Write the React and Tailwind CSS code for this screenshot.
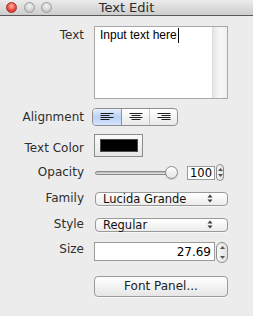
import React from "react";

const LABEL = "w-[84px] shrink-0 text-right text-[12px] leading-[15px] text-[#2e2e2e]";

const AlignIcon = ({ kind }) => {
  const long = 13;
  const short = 9;
  const x = (w) => (kind === "left" ? 0.5 : kind === "center" ? (long - w) / 2 + 0.5 : long - w + 0.5);
  return (
    <svg width="14" height="8" viewBox="0 0 14 8">
      {[long, short, long, short].map((w, i) => (
        <line key={i} x1={x(w)} x2={x(w) + w} y1={i * 2 + 0.5} y2={i * 2 + 0.5} stroke="#1e1e1e" strokeWidth="1" />
      ))}
    </svg>
  );
};

const UpDown = () => (
  <svg width="6" height="9" viewBox="0 0 6 9">
    <path d="M3 0.5 L5.5 3.5 L0.5 3.5 Z" fill="#3a3a3a" />
    <path d="M3 8.5 L5.5 5.5 L0.5 5.5 Z" fill="#3a3a3a" />
  </svg>
);

const Stepper = ({ w, h }) => (
  <div
    className="flex flex-col items-center justify-between rounded-full border border-[#8e8e8e] bg-gradient-to-r from-[#f6f6f6] to-[#e2e2e2] py-[3px]"
    style={{ width: w, height: h }}
  >
    <svg width="5" height="3" viewBox="0 0 5 3"><path d="M2.5 0 L5 3 L0 3 Z" fill="#555" /></svg>
    <svg width="5" height="3" viewBox="0 0 5 3"><path d="M2.5 3 L5 0 L0 0 Z" fill="#555" /></svg>
  </div>
);

const Popup = ({ value }) => (
  <div className="flex h-[14px] w-[133px] items-center justify-between rounded-[4px] border border-[#999] bg-gradient-to-b from-[#ffffff] to-[#ececec] pl-[7px] pr-[14px] shadow-[0_1px_0_rgba(255,255,255,0.6)]">
    <span className="text-[11.5px] leading-[12px] text-[#111]">{value}</span>
    <UpDown />
  </div>
);

const Light = ({ red }) => (
  <div
    className={
      red
        ? "h-[11px] w-[11px] rounded-full border border-[#a5312a] bg-[radial-gradient(circle_at_50%_35%,#ffb3ad_0%,#ea4a40_55%,#c2241c_100%)]"
        : "h-[11px] w-[11px] rounded-full border border-[#9c9c9c] bg-[radial-gradient(circle_at_50%_35%,#f4f4f4_0%,#d3d3d3_55%,#b4b4b4_100%)]"
    }
  />
);

export default function App() {
  return (
    <div className="h-[316px] w-[253px] overflow-hidden bg-[#ececec]" style={{ fontFamily: '"DejaVu Sans", "Liberation Sans", sans-serif' }}>
      {/* title bar */}
      <div className="relative flex h-[16px] items-center border-b border-[#5a5a5a] bg-gradient-to-b from-[#ebebeb] to-[#cdcdcd] pl-[6px]">
        <div className="flex gap-[6.5px]">
          <Light red />
          <Light />
          <Light />
        </div>
        <div className="absolute inset-x-0 top-0 text-center text-[13px] leading-[16px] text-[#2b2b2b]">Text Edit</div>
      </div>

      <div className="flex flex-col">
        {/* Text */}
        <div className="mt-[10px] flex items-start gap-[10px]">
          <div className={`${LABEL} pt-[2px]`}>Text</div>
          <div className="flex h-[73px] w-[134px] border border-[#a8a8a8] bg-white">
            <div className="flex flex-1 items-start pl-[5px] pt-[1px]">
              <span className="text-[12px] leading-[15px] text-black" style={{ fontFamily: '"Liberation Sans", Arial, sans-serif' }}>
                Input text here
              </span>
              <span className="ml-[1px] h-[15px] w-[1px] bg-black" />
            </div>
            <div className="w-[15px] border-l border-[#dcdcdc] bg-gradient-to-r from-[#e6e6e6] via-[#f7f7f7] to-[#efefef]" />
          </div>
        </div>

        {/* Alignment */}
        <div className="mt-[9px] flex items-center gap-[10px]">
          <div className={LABEL}>Alignment</div>
          <div className="-ml-[2px] flex h-[18px] w-[86px] overflow-hidden rounded-[4px] border border-[#8f8f8f] bg-gradient-to-b from-[#ffffff] to-[#e9e9e9]">
            <div className="flex w-[29px] items-center justify-center border-r border-[#7d94c4] bg-gradient-to-b from-[#e4eefc] via-[#b9d2f5] to-[#d4e4fb]">
              <AlignIcon kind="left" />
            </div>
            <div className="flex w-[28px] items-center justify-center border-r border-[#c6c6c6]">
              <AlignIcon kind="center" />
            </div>
            <div className="flex flex-1 items-center justify-center">
              <AlignIcon kind="right" />
            </div>
          </div>
        </div>

        {/* Text Color */}
        <div className="mt-[8px] flex items-center gap-[10px]">
          <div className={`${LABEL} pt-[5px]`}>Text Color</div>
          <div className="flex h-[23px] w-[49px] items-center justify-center border border-[#8c8c8c] bg-gradient-to-b from-[#fbfbfb] to-[#e6e6e6]">
            <div className="h-[13px] w-[38px] border border-[#4a4a4a] bg-black" />
          </div>
        </div>

        {/* Opacity */}
        <div className="mt-[7px] flex items-center gap-[10px]">
          <div className={LABEL}>Opacity</div>
          <div className="flex items-center">
            <div className="relative flex h-[17px] w-[84px] items-center">
              <div className="ml-[1px] h-[4px] w-[76px] rounded-full border border-[#8a8a8a] bg-gradient-to-b from-[#b5b5b5] to-[#e8e8e8]" />
              <div className="absolute right-0 top-[2px] h-[13px] w-[13px] rounded-full border border-[#8a8a8a] bg-gradient-to-b from-[#ffffff] to-[#e4e4e4] shadow-[0_1px_1px_rgba(0,0,0,0.15)]" />
            </div>
            <div className="ml-[9px] flex h-[14px] w-[28px] items-center justify-end border border-[#9a9a9a] bg-white pr-[2px]">
              <span className="text-[11.5px] leading-[12px] text-black">100</span>
            </div>
            <div className="ml-[1px]">
              <Stepper w={8} h={17} />
            </div>
          </div>
        </div>

        {/* Family */}
        <div className="mt-[10px] flex items-center gap-[11px]">
          <div className={LABEL}>Family</div>
          <Popup value="Lucida Grande" />
        </div>

        {/* Style */}
        <div className="mt-[11px] flex items-center gap-[11px]">
          <div className={LABEL}>Style</div>
          <Popup value="Regular" />
        </div>

        {/* Size */}
        <div className="mt-[10px] flex items-start gap-[10px]">
          <div className={LABEL}>Size</div>
          <div className="flex items-start">
            <div className="flex h-[19px] w-[121px] items-center justify-end border border-[#9a9a9a] bg-white pr-[3px]">
              <span className="text-[12px] leading-[14px] text-black">27.69</span>
            </div>
            <div className="ml-[1px]">
              <Stepper w={12} h={21} />
            </div>
          </div>
        </div>

        {/* Font Panel */}
        <div className="mt-[13px] flex gap-[10px]">
          <div className="w-[84px] shrink-0" />
          <div className="flex h-[21px] w-[134px] items-center justify-center rounded-[4px] border border-[#9a9a9a] bg-gradient-to-b from-[#ffffff] to-[#e6e6e6] shadow-[0_1px_0_rgba(255,255,255,0.7)]">
            <span className="text-[12px] leading-[15px] text-[#222]">Font Panel...</span>
          </div>
        </div>
      </div>
    </div>
  );
}
